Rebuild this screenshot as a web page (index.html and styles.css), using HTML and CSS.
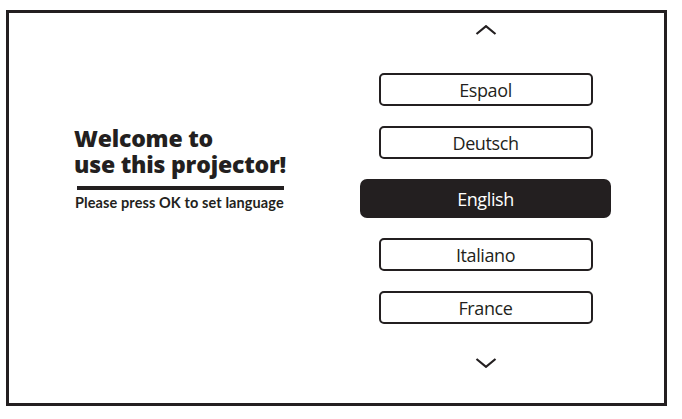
FILE: index.html
```html
<!DOCTYPE html>
<html>
<head>
<meta charset="utf-8">
<link rel="stylesheet" href="styles.css">
</head>
<body>
<div class="frame">
  <div class="intro">
    <h1 class="title">Welcome to<br>use this projector!</h1>
    <div class="rule"></div>
    <p class="hint">Please press OK to set language</p>
  </div>
  <div class="picker">
    <svg class="chev chev-up" width="22" height="10" viewBox="0 0 22 10"><path d="M1.5 9 L11 1.2 L20.5 9" fill="none" stroke="#231f20" stroke-width="2.2"/></svg>
    <ul class="langs">
      <li class="lang">Espaol</li>
      <li class="lang">Deutsch</li>
      <li class="lang lang-active">English</li>
      <li class="lang">Italiano</li>
      <li class="lang">France</li>
    </ul>
    <svg class="chev chev-down" width="22" height="10" viewBox="0 0 22 10"><path d="M1.5 1 L11 8.8 L20.5 1" fill="none" stroke="#231f20" stroke-width="2.2"/></svg>
  </div>
</div>
</body>
</html>
```
FILE: styles.css
```css
html, body {
  margin: 0;
  padding: 0;
  background: #ffffff;
}
body {
  padding: 10px 0 0 6px;
}
.frame {
  box-sizing: border-box;
  width: 661px;
  height: 396px;
  border: 3px solid #231f20;
  display: flex;
  flex-direction: row;
  color: #231f20;
}
.intro {
  width: 351px;
  flex: none;
  box-sizing: border-box;
  padding: 112px 0 0 65px;
}
.title {
  margin: 0;
  font-family: "Open Sans", Lato, sans-serif;
  font-weight: 800;
  font-size: 23px;
  line-height: 26px;
  letter-spacing: -0.2px;
}
.rule {
  width: 207px;
  height: 4px;
  background: #231f20;
  margin: 9px 0 0 3px;
}
.hint {
  margin: 5px 0 0 1px;
  font-family: Lato, "Open Sans", sans-serif;
  font-weight: 700;
  font-size: 14.5px;
  line-height: 16px;
  letter-spacing: 0.1px;
}
.picker {
  width: 251px;
  flex: none;
  display: flex;
  flex-direction: column;
  align-items: center;
  padding-top: 12px;
}
.chev {
  display: block;
}
.langs {
  list-style: none;
  margin: 38px 0 0 0;
  padding: 0;
  display: flex;
  flex-direction: column;
  align-items: center;
  gap: 20px;
}
.lang {
  box-sizing: border-box;
  width: 214px;
  height: 33px;
  border: 2px solid #231f20;
  border-radius: 5px;
  display: flex;
  align-items: center;
  justify-content: center;
  font-family: "Open Sans", sans-serif;
  font-size: 18px;
  letter-spacing: -0.4px;
  color: #231f20;
}
.lang-active {
  width: 251px;
  height: 39px;
  border: none;
  border-radius: 7px;
  background: #231f20;
  color: #ffffff;
}
.chev-down {
  margin-top: 34px;
}
```
